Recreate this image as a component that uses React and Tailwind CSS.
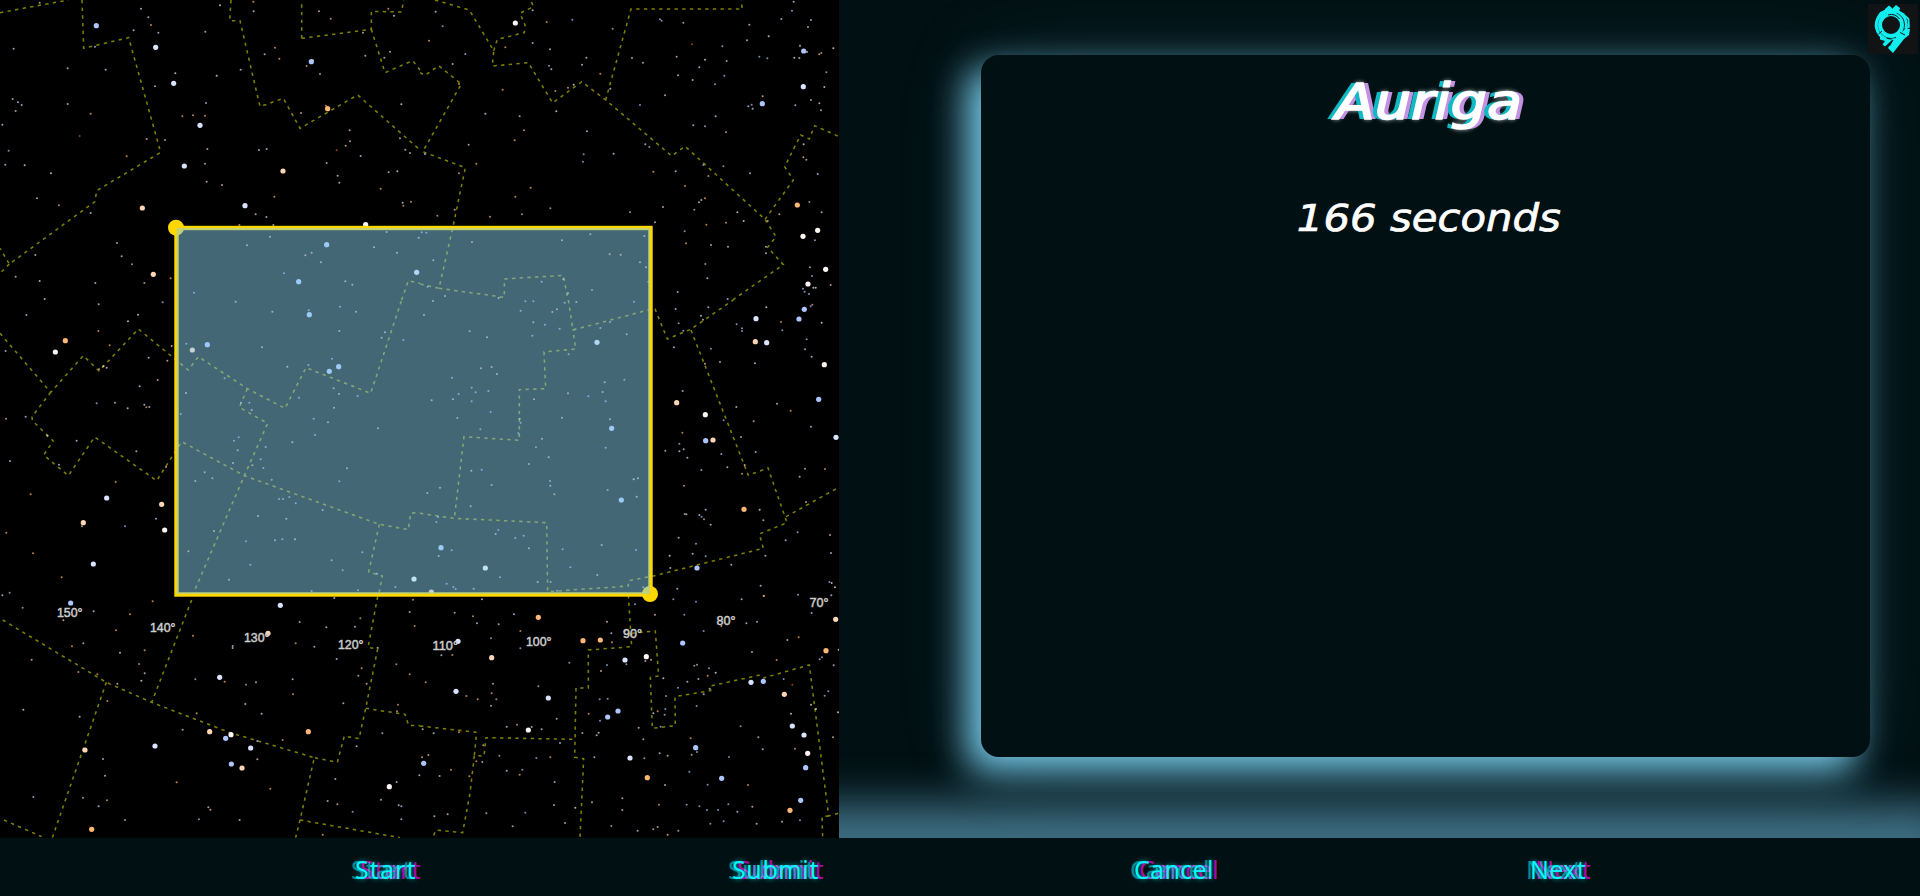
import React from "react";

const INK = {
  w: "#fff6f4",
  l: "#d9e2ff",
  b: "#adc6ff",
  p: "#ffd6b5",
  o: "#ffb875",
  r: "#d65a10",
};

// Sky sectors: each one is a 420px wide region drawn on a 3x grid.
const SECTORS = [
  {
    at: [0, 0],
    big: "289,77,b 467,142,l 521,250,l 600,376,l 553,498,l 934,185,b 983,326,o 849,513,p 427,624,p 735,617,l 460,823,p 1097,674,w 980,734,b 896,845,b 1250,817,l",
    small:
      "119,8,p 41,146,l 203,205,p 423,26,l 445,52,l 453,75,o 401,91,l 475,98,l 285,140,l 317,209,l 526,220,w 465,259,l 38,297,p 54,307,l 65,315,l 47,333,p 203,312,p 272,341,o 7,374,l 239,408,r 26,452,b 440,417,p 495,420,p 16,494,l 74,496,w 153,520,w 380,469,o 111,595,p 177,616,o 272,639,l 351,729,p 365,769,p 396,793,o 106,765,p 47,830,p 119,843,w 286,849,l 433,849,o 512,835,o 134,897,w 660,16,w 616,95,l 760,5,o 761,34,l 957,34,p 992,56,o 794,163,l 825,143,o 838,176,o 939,181,o 920,198,o 960,222,p 722,209,l 650,227,w 618,309,l 547,349,o 579,346,o 615,347,o 622,447,p 615,491,p 620,545,p 666,555,p 777,450,l 800,447,l 903,339,p 978,317,o 1049,391,p 1050,424,p 1037,437,p 1010,451,r 980,489,p 1082,468,l 1013,527,l 1018,548,l 1142,566,o 1166,517,p 1192,514,w 1200,415,p 1216,449,l 1230,459,l 1204,313,w 1165,26,o 1182,47,w 1170,155,l 1153,173,p 1096,167,l 1089,98,p 1233,605,o 1208,608,l 1210,617,o 823,590,o 767,643,p 799,651,l 820,675,p 718,675,o 810,710,l 741,736,p 852,820,b 935,758,l 916,766,p 963,787,p 1036,844,p 1057,854,p 1122,742,l 1160,696,l 1191,758,l 582,878,b 1256,713,l",
    lines: [
      "0,38 205,0",
      "246,0 251,145 386,113 482,457 290,572 285,605 28,792 0,745",
      "28,792 0,820",
      "693,0 689,62 720,62 780,320 850,295 900,385 1073,285 1260,450",
      "905,115 905,0",
      "905,115 1114,88 1114,34 1205,36 1211,0",
      "1114,88 1155,218 1238,182 1260,210",
      "1205,900 1225,842 1260,850",
    ],
  },
  {
    at: [420, 0],
    big: "286,69,w 1151,153,b 1150,260,l 1027,311,b 1132,615,o 1149,709,w 1193,691,w 1217,808,w 1164,852,w",
    small:
      "47,35,l 68,79,b 27,122,o 136,162,l 98,192,l 117,252,o 248,269,o 196,341,l 299,349,l 312,391,o 284,421,o 146,434,p 169,491,o 117,520,o 15,462,l 286,590,o 332,563,o 306,643,b 391,625,b 210,650,o 52,647,o 104,629,p 338,31,l 380,66,o 457,59,b 338,129,l 390,148,p 256,142,o 387,197,b 394,208,l 499,173,p 486,194,l 541,221,o 461,254,w 444,263,o 406,273,o 409,334,w 501,394,l 491,463,b 489,485,b 581,461,l 630,637,b 705,667,l 660,315,b 735,286,p 700,515,o 767,514,l 571,266,l 578,86,b 720,58,b 725,62,b 790,68,p 636,174,l 669,188,p 770,170,p 816,133,r 855,179,w 838,202,l 907,139,b 920,183,p 774,226,l 818,240,l 885,253,b 913,227,b 981,121,l 1018,170,b 1046,109,w 1084,57,l 1116,32,b 1121,5,l 1173,60,l 1164,81,l 1140,137,w 1161,156,w 1123,173,w 1138,174,l 1198,163,p 1204,159,o 1240,145,w 1219,217,b 1213,261,w 1173,300,p 1198,310,p 1203,331,p 1126,316,l 1028,289,p 985,319,l 995,314,b 998,326,l 988,74,p 1042,175,b 887,349,l 855,379,b 820,376,l 918,397,o 676,433,l 688,441,b 850,495,b 910,499,b 865,528,o 990,520,l 795,558,o 855,595,o 844,600,p 837,607,l 823,629,b 729,621,p 952,637,w 971,663,w 918,668,o 859,674,o 794,694,b 798,730,o 873,735,l 924,740,l 856,792,o 862,835,l 773,876,l 923,897,l 1043,663,p 1078,643,p 1168,606,b 1205,637,p 1150,472,p 1159,479,p 1193,522,l 1151,433,w 1185,721,b 1038,740,l 1038,760,l 1170,802,p 1176,828,b 1180,863,w 1187,863,w 1149,866,b 1154,875,b 1167,882,b 1232,855,p 5,697,b 19,698,b 156,726,p 40,781,l 75,888,l 23,860,b 236,894,w 365,845,b 426,721,p 511,703,l 430,838,p 444,880,l 516,870,b 569,763,p 602,764,p 660,787,l 678,802,l 673,708,l 685,845,b",
    lines: [
      "45,0 148,30 221,152 217,198 325,188 398,309 485,245 557,300 755,468 795,439 1035,658 1068,710 1043,742 1090,794 938,900",
      "221,152 232,118 313,98 315,75 300,40 340,20 332,0",
      "557,300 633,27 967,27 963,0",
      "0,218 15,226 56,197 124,252 8,455 136,503 100,675 57,865 0,852",
      "57,865 253,892 253,837 430,826 444,900",
      "1035,658 1120,540 1094,500 1142,405 1168,417 1184,377 1258,410",
    ],
  },
  {
    at: [0, 300],
    big: "196,122,o 166,156,w 577,150,p 622,134,b 928,44,b 1016,200,b 988,214,b 320,594,l 485,613,p 250,668,p 494,690,w 280,792,l 1242,837,w",
    small:
      "296,13,l 488,7,b 414,44,w 384,64,w 79,45,l 295,93,o 329,136,o 17,153,l 515,138,p 446,173,l 502,182,p 297,208,p 310,199,w 320,203,p 473,240,p 419,259,l 290,310,b 345,308,p 383,325,l 433,314,l 439,322,o 448,321,l 18,356,o 77,350,l 142,407,w 230,422,l 409,454,l 177,494,l 498,501,p 30,483,l 347,546,o 92,583,o 375,679,b 468,656,l 246,679,p 19,698,o 99,760,o 185,832,o 29,878,b 7,886,l 559,131,b 558,279,l 542,342,b 674,235,b 786,142,l 862,200,l 707,5,l 817,35,l 926,31,b 1020,20,b 1068,35,l 1018,93,l 1155,97,l 1145,113,p 1210,120,b 996,176,b 925,195,b 1001,265,l 1017,282,l 1073,288,b 897,293,b 1002,323,l 941,356,b 984,367,l 945,405,b 877,427,w 1134,385,p 723,308,l 748,308,b 755,330,l 716,412,b 702,422,b 713,451,l 797,441,b 782,478,b 757,496,p 790,504,b 699,489,l 614,517,p 586,543,l 637,535,p 815,539,b 837,597,b 849,597,b 868,591,b 887,610,b 968,630,l 1018,544,b 1041,505,l 859,656,l 774,648,l 642,693,l 738,724,b 825,721,l 847,718,b 885,718,w 751,794,b 565,754,p 687,839,l 1087,757,b 1028,811,b 995,781,p 1131,821,l 1186,861,b 1074,871,b 935,873,b",
    lines: [
      "0,100 152,277 250,167 297,213 415,87 565,210 595,170 742,266 855,325 918,203 1112,280 1205,0",
      "742,266 718,322 803,370 733,527 580,880 575,900",
      "152,277 96,350 97,362 160,423 131,465 205,527 284,411 470,542 545,425 733,527 1138,673 1225,689 1232,640 1260,636",
      "1138,673 1106,816 1147,828 1135,890",
    ],
  },
  {
    at: [420, 300],
    big: "1153,28,b 1008,56,l 1137,57,b 1006,125,p 1040,128,l 1213,194,w 1196,298,b 770,308,p 856,344,w 857,422,b 879,420,p 1248,412,l 531,127,l 575,385,b 604,600,b 972,628,o 63,743,b 196,804,w 831,804,b 34,876,p",
    small:
      "39,3,p 12,45,l 149,94,p 201,112,l 302,32,b 316,4,b 340,4,b 340,67,l 337,107,b 375,74,b 397,36,p 411,28,p 434,8,b 469,6,l 419,86,b 446,163,b 642,5,b 570,66,b 541,84,b 620,103,p 183,205,p 215,201,p 231,222,p 96,233,b 155,263,b 167,277,b 205,273,b 116,282,b 99,298,l 155,304,b 212,336,b 112,354,p 35,301,p 181,388,b 295,400,b 299,356,p 302,368,b 342,298,p 444,280,p 426,353,p 366,416,p 348,442,b 386,472,l 327,492,p 185,509,b 154,512,p 215,555,p 390,543,b 391,557,l 403,583,o 505,289,b 554,247,l 548,276,p 557,304,b 613,239,b 570,358,p 557,443,b 641,538,w 654,535,l 563,570,b 650,590,l 22,579,p 60,563,p 152,619,l 49,666,b 54,651,b 235,690,b 227,702,l 286,714,b 311,707,b 327,745,l 428,748,b 545,735,p 648,750,b 451,802,b 532,825,l 240,832,b 95,751,b 56,768,l 80,851,b 100,861,b 107,867,b 161,866,p 353,846,l 392,846,b 411,872,b 670,862,b 767,27,l 776,70,b 790,92,b 843,47,l 849,59,p 865,22,l 950,73,b 966,85,b 966,93,b 1039,22,w 1083,66,o 1087,91,b 1177,14,o 1172,19,b 1205,68,w 1160,118,b 1155,148,l 1175,170,l 762,142,l 873,146,b 900,186,l 1005,190,l 855,191,p 788,273,l 949,321,l 1071,311,p 1112,332,o 1001,364,p 911,361,b 1173,380,l 787,398,o 778,431,b 791,448,l 778,454,l 736,452,p 802,473,l 904,462,l 922,502,l 844,510,l 963,411,p 1007,456,l 974,495,p 966,521,o 1155,506,p 1139,530,l 1215,507,o 792,557,o 857,629,l 794,642,o 799,643,l 838,645,l 845,650,b 852,658,o 872,674,l 1019,629,w 1030,661,p 1158,606,p 1133,697,b 1097,721,l 1230,705,p 776,713,l 828,731,b 818,761,l 749,767,w 857,769,b 934,794,l 1036,767,l 1233,759,l 751,804,l 772,866,l 1022,857,l 1032,887,o 1134,884,b 1228,846,b 1235,849,w 1245,862,w",
    lines: [
      "0,640 103,655 380,668 383,875 625,858 625,842 700,828 1030,745 1018,702 1101,668 1044,504 985,526 812,88 940,0",
      "445,0 459,90 685,30 705,27 742,117 812,88",
      "467,87 459,90 467,147 372,156 377,266 298,269 298,421 132,410 103,655",
      "1098,650 1260,560",
    ],
  },
  {
    at: [0, 560],
    big: "212,129,b 841,136,l 804,220,p 659,352,l 465,558,l 629,515,p 677,535,b 693,524,w 752,564,l 694,612,b 726,624,p 925,515,o 255,570,p 275,808,o 1168,680,w",
    small:
      "68,143,o 281,154,l 190,181,p 348,211,o 390,163,o 458,124,o 216,259,o 250,250,p 95,299,p 235,336,o 292,343,o 360,278,w 434,271,o 417,312,o 434,340,l 424,362,w 352,371,p 322,423,o 70,449,w 239,470,l 579,227,o 698,258,l 698,264,l 586,358,b 674,365,o 738,374,b 768,367,l 736,432,l 785,461,l 590,460,o 548,509,p 878,358,l 879,403,o 899,186,p 887,250,o 943,260,l 979,202,p 1065,200,l 1081,175,o 1003,114,l 1010,297,l 1085,325,o 1075,347,l 1100,371,p 1133,263,l 1189,313,o 1229,343,o 1229,156,p 1244,198,o 1239,119,o 1194,434,o 1191,454,o 1030,430,l 1147,520,l 1070,559,l 848,540,o 772,543,l 772,598,p 530,667,o 811,686,o 309,597,l 315,647,l 249,713,p 321,721,o 296,739,l 100,711,l 375,780,p 625,742,l 631,749,p 597,778,b 719,780,l 1006,657,l 1190,666,l 1143,719,l 983,723,p 1012,733,p 1058,755,b 1196,736,l 1204,739,l 1204,778,l 968,824,o 1258,646,l",
    lines: [
      "8,180 319,367 455,427 690,518 943,593 900,780 887,833",
      "575,120 455,427",
      "1133,110 1104,262 1133,267 1097,445 1077,536 1033,528 1012,607 943,593",
      "319,367 157,833",
      "12,780 125,830",
      "900,780 1200,833",
      "1097,445 1215,463 1226,496 1260,497",
    ],
  },
  {
    at: [420, 560],
    big: "114,244,l 355,172,o 489,242,o 541,240,o 215,293,p 108,394,l 385,414,l 325,510,w 615,300,l 679,290,w 788,249,b 594,453,b 563,471,b 630,594,l 682,653,o 827,563,b 905,655,b 11,610,b 993,367,l 1030,364,b 1093,403,p 1117,498,l 1152,525,l 1163,580,w 1157,623,b 1142,721,b 1110,751,o 1218,272,o 1247,178,p",
    small:
      "614,213,p 104,158,p 159,169,o 171,190,l 236,193,p 282,163,l 186,118,l 301,213,o 213,235,b 301,265,b 64,286,l 97,285,o 448,308,b 561,185,p 574,220,l 576,247,o 645,133,b 705,164,p 561,315,b 543,333,p 619,313,b 676,303,l 693,299,p 760,118,b 828,125,b 965,118,l 1031,108,o 1175,159,l 793,164,b 851,213,b 904,198,p 979,190,l 1011,185,l 1102,240,l 1136,232,o 996,276,l 1070,300,o 823,317,b 831,314,o 867,325,b 887,338,w 863,347,o 802,365,l 730,355,w 774,383,b 835,357,l 869,386,l 851,403,l 830,438,b 738,408,b 736,447,b 700,460,w 713,454,o 734,464,b 722,500,b 17,367,o 139,408,o 173,418,o 219,371,p 215,400,o 229,418,o 213,437,p 355,379,b 410,476,p 506,461,o 540,482,b 539,418,b 563,416,b 291,494,o 260,500,l 335,501,p 365,508,l 487,519,l 530,526,l 536,518,l 656,503,p 670,538,p 812,535,o 815,584,p 831,576,b 719,580,l 743,587,p 673,595,b 523,592,l 420,549,l 391,592,o 349,594,b 307,629,b 299,644,o 260,632,l 238,587,b 190,556,p 187,606,l 169,604,o 117,517,o 41,520,l 8,508,p 25,585,p 6,592,o 93,629,o 59,648,p 148,649,o 404,666,l 402,735,p 466,743,w 516,727,l 607,715,p 607,750,p 717,734,o 735,675,l 808,635,b 863,674,b 927,591,b 962,499,b 1015,532,l 1028,568,l 1125,566,o 984,675,o 800,734,b 838,739,b 861,750,b 894,750,b 925,733,b 952,755,l 997,740,p 1010,791,l 911,784,b 871,791,b 1086,785,p 1140,781,b 574,798,b 653,812,l 700,808,p 713,801,p 743,824,p 775,812,p 316,758,b 278,799,p 199,760,p 83,763,p 43,769,p 435,789,p 1199,298,l 1206,292,b 1241,316,l 1256,269,w 1091,357,b 1117,374,r 1214,407,b 1225,394,b 1173,434,w 1188,447,w 1254,457,w 1113,461,w 1239,532,p 1234,106,l",
    lines: [
      "625,105 635,260 505,270 505,384 468,384 464,592 491,596 480,833",
      "635,220 706,213 716,348 691,352 697,505 766,497 765,410 872,392 872,378 1020,345 1030,354 1168,315 1226,768 1260,758",
      "1226,768 1206,770 1208,833",
      "0,498 170,517 163,587 192,588 198,533 464,538",
      "163,587 150,700 128,818 48,810 40,828",
    ],
  },
];

const DEGREES = [
  ["150°", 57, 616.6],
  ["140°", 150, 632.4],
  ["130°", 244, 642.4],
  ["120°", 338, 648.7],
  ["110°", 432.5, 649.7],
  ["100°", 526, 645.7],
  ["90°", 623, 637.7],
  ["80°", 716.5, 624.7],
  ["70°", 809.5, 606.7],
];

const parse = (list) =>
  list.split(" ").map((item) => {
    const [x, y, c] = item.split(",");
    return { x: Number(x), y: Number(y), c };
  });

function SkyMap() {
  return (
    <svg width="839" height="838" viewBox="0 0 839 838" className="block">
      {SECTORS.map((s, i) => (
        <g key={i} transform={`translate(${s.at[0]} ${s.at[1]}) scale(0.33333)`}>
          {s.lines.map((p, j) => (
            <polyline
              key={j}
              points={p}
              fill="none"
              stroke="#808000"
              strokeWidth="4.6"
              strokeDasharray="10 13"
            />
          ))}
          {parse(s.small).map((t, j) => (
            <circle key={j} cx={t.x} cy={t.y} r="3.1" fill={INK[t.c]} opacity="0.7" />
          ))}
          {parse(s.big).map((t, j) => (
            <circle key={j} cx={t.x} cy={t.y} r="7.8" fill={INK[t.c]} />
          ))}
        </g>
      ))}
      <g
        fill="#cccccc"
        stroke="#cccccc"
        strokeWidth="0.5"
        fontFamily="'Liberation Sans', Arial, sans-serif"
        fontSize="13.5"
      >
        {DEGREES.map(([label, x, y]) => (
          <text
            key={label}
            x={x}
            y={y}
            textLength={label.length === 4 ? 25.5 : 19}
            lengthAdjust="spacingAndGlyphs"
          >
            {label}
          </text>
        ))}
      </g>
      <rect x="176.5" y="228" width="474" height="366.5" fill="none" stroke="#ffd700" strokeWidth="4.4" />
      <circle cx="176" cy="227.7" r="8" fill="#ffd700" />
      <circle cx="650" cy="594" r="8" fill="#ffd700" />
      <rect x="176.5" y="228" width="473.5" height="366" fill="#87ceeb" fillOpacity="0.5" />
      <rect x="176" y="227.5" width="474.5" height="367" fill="none" stroke="#ffd700" strokeWidth="1.4" strokeOpacity="0.4" />
    </svg>
  );
}

function Logo() {
  return (
    <svg width="50" height="50" viewBox="0 0 50 50" className="block">
      <g fill="#12eef0">
        <path d="M17 5 21 1.5 24 4 23 8 17 9ZM25 4 28 1 32 4 31 8 25 8Z" />
        <path d="M9 14 12 8 19 5.5 30 6 37 10 35 12.5 29 9 18 9 11 15Z" />
        <path d="M28 32 35 27 37 25 42 25 41 31 36 35 25 49 20 44 25 36 21 35 28 34Z" />
        <path d="M12 32 20 35 24 36 17 42.5 14.5 40.5 17 37 12 35.5Z" />
      </g>
      <circle cx="23" cy="21" r="11" fill="none" stroke="#12eef0" strokeWidth="4" />
      <circle cx="23.300" cy="21" r="15" fill="none" stroke="#12eef0" strokeWidth="3" strokeDasharray="49 3 17 4 8 13.25" transform="rotate(110 23.300 21)" />
      <path d="M20 11A10.300 10.300 0 0 1 31.500 15M14 27 10.500 30" fill="none" stroke="#111314" strokeWidth="1" />
      <path d="M36 11 40.500 15 41 23 38.500 24" fill="none" stroke="#12eef0" strokeWidth="1.700" />
      <path d="M32 28.500 37 31M25 36 21.500 42" fill="none" stroke="#111314" strokeWidth="1" />
    </svg>
  );
}

const ACTIONS = [
  { label: "Start", cell: "w-[377px]", text: "tracking-[1.1px]" },
  { label: "Submit", cell: "w-[402px]", text: "tracking-[0.6px]" },
  { label: "Cancel", cell: "w-[396px]", text: "tracking-[0.3px]" },
  { label: "Next", cell: "w-[200px]", text: "tracking-[0.3px]" },
];

export default function App() {
  return (
    <div className="flex h-[896px] w-[1920px] flex-col overflow-hidden bg-[#011013]">
      <main className="flex h-[838px]">
        <section className="relative z-20 w-[839px] shrink-0 bg-black">
          <SkyMap />
        </section>
        <section className="relative flex-1 pt-[55px] pl-[142px]">
          <div className="flex h-[702px] w-[889px] flex-col items-center rounded-[18px] bg-[#011013] pl-[6px] text-white shadow-[-14px_14px_36px_#78cbeb,0_0_90px_rgba(108,180,200,0.14)]">
            <h1 className="mt-[18px] h-[60px] origin-center scale-x-[1.17] font-['DejaVu_Sans',sans-serif] text-[49px] leading-[60px] font-normal whitespace-nowrap italic [-webkit-text-stroke:1.6px_white] [text-shadow:-4.4px_0_0_#0fb9c4,4.4px_0_0_#c492e2,0_0_5px_#ffffff]">
              Auriga
            </h1>
            <p className="mt-[64px] origin-center scale-x-[1.13] font-['DejaVu_Sans',sans-serif] text-[37px] leading-[44px] whitespace-nowrap italic [-webkit-text-stroke:0.7px_white]">
              166 seconds
            </p>
          </div>
          <div className="absolute top-1 right-[2px] h-[50px] w-[50px] bg-[#111314]">
            <Logo />
          </div>
        </section>
      </main>
      <footer className="relative z-10 flex h-[58px] items-center bg-[#011013] pl-[355px] shadow-[0_0_44px_34px_rgba(120,200,236,0.52)]">
        {ACTIONS.map(({ label, cell, text }) => (
          <div key={label} className={cell}>
            <button
              className={`mt-[4px] block font-['Noto_Sans','Open_Sans',sans-serif] text-[25px] leading-[34px] text-[#08f7fe] [text-shadow:-4px_0_0_rgba(8,247,254,0.5),5px_0_0_rgba(255,0,230,0.7),0_0_5px_rgba(8,247,254,0.7)] ${text}`}
            >
              {label}
            </button>
          </div>
        ))}
      </footer>
    </div>
  );
}
